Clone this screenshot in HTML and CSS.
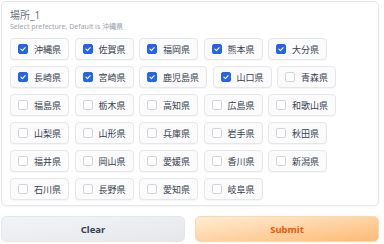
FILE: index.html
```html
<!DOCTYPE html>
<html lang="ja">
<head>
<meta charset="utf-8">
<link rel="stylesheet" href="styles.css">
</head>
<body>
<div class="app">
  <div class="card">
    <div class="label">場所_1</div>
    <div class="info">Select prefecture, Default is 沖縄県</div>
    <div class="group">
      <label class="item"><span class="box on"><svg viewBox="0 0 10 10"><path d="M2.4 5.2 L4.3 7 L7.7 3.2"/></svg></span>沖縄県</label>
      <label class="item"><span class="box on"><svg viewBox="0 0 10 10"><path d="M2.4 5.2 L4.3 7 L7.7 3.2"/></svg></span>佐賀県</label>
      <label class="item"><span class="box on"><svg viewBox="0 0 10 10"><path d="M2.4 5.2 L4.3 7 L7.7 3.2"/></svg></span>福岡県</label>
      <label class="item"><span class="box on"><svg viewBox="0 0 10 10"><path d="M2.4 5.2 L4.3 7 L7.7 3.2"/></svg></span>熊本県</label>
      <label class="item"><span class="box on"><svg viewBox="0 0 10 10"><path d="M2.4 5.2 L4.3 7 L7.7 3.2"/></svg></span>大分県</label>
      <label class="item"><span class="box on"><svg viewBox="0 0 10 10"><path d="M2.4 5.2 L4.3 7 L7.7 3.2"/></svg></span>長崎県</label>
      <label class="item"><span class="box on"><svg viewBox="0 0 10 10"><path d="M2.4 5.2 L4.3 7 L7.7 3.2"/></svg></span>宮崎県</label>
      <label class="item"><span class="box on"><svg viewBox="0 0 10 10"><path d="M2.4 5.2 L4.3 7 L7.7 3.2"/></svg></span>鹿児島県</label>
      <label class="item"><span class="box on"><svg viewBox="0 0 10 10"><path d="M2.4 5.2 L4.3 7 L7.7 3.2"/></svg></span>山口県</label>
      <label class="item"><span class="box"></span>青森県</label>
      <label class="item"><span class="box"></span>福島県</label>
      <label class="item"><span class="box"></span>栃木県</label>
      <label class="item"><span class="box"></span>高知県</label>
      <label class="item"><span class="box"></span>広島県</label>
      <label class="item"><span class="box"></span>和歌山県</label>
      <label class="item"><span class="box"></span>山梨県</label>
      <label class="item"><span class="box"></span>山形県</label>
      <label class="item"><span class="box"></span>兵庫県</label>
      <label class="item"><span class="box"></span>岩手県</label>
      <label class="item"><span class="box"></span>秋田県</label>
      <label class="item"><span class="box"></span>福井県</label>
      <label class="item"><span class="box"></span>岡山県</label>
      <label class="item"><span class="box"></span>愛媛県</label>
      <label class="item"><span class="box"></span>香川県</label>
      <label class="item"><span class="box"></span>新潟県</label>
      <label class="item"><span class="box"></span>石川県</label>
      <label class="item"><span class="box"></span>長野県</label>
      <label class="item"><span class="box"></span>愛知県</label>
      <label class="item"><span class="box"></span>岐阜県</label>
    </div>
  </div>
  <div class="actions">
    <button class="btn clear">Clear</button>
    <button class="btn submit">Submit</button>
  </div>
</div>
</body>
</html>
```

FILE: styles.css
```css
html, body {
  margin: 0;
  padding: 0;
  background: #ffffff;
}
body {
  font-family: "Noto Sans", "Noto Sans CJK JP", sans-serif;
}
.app {
  width: 378px;
  padding: 1px 0 0 1px;
}
.card {
  background: #ffffff;
  border: 1px solid #e5e7eb;
  border-radius: 5px;
  padding: 6px 8px 5px 8px;
  box-shadow: 0 1px 2px rgba(0,0,0,0.04);
}
.label {
  font-size: 10px;
  line-height: 14px;
  color: #6b7280;
}
.info {
  font-size: 7px;
  line-height: 10px;
  color: #9ca3af;
  margin-bottom: 6px;
}
.group {
  display: flex;
  flex-wrap: wrap;
  gap: 6px 5.5px;
}
.item {
  display: flex;
  align-items: center;
  height: 22px;
  box-sizing: border-box;
  padding: 0 7px;
  border: 1px solid #e5e7eb;
  border-radius: 4px;
  background: #fbfbfc;
  box-shadow: 0 1px 1px rgba(0,0,0,0.04);
  font-family: "Noto Sans CJK JP", sans-serif;
  font-size: 9px;
  color: #374151;
}
.box {
  width: 10px;
  height: 10px;
  box-sizing: border-box;
  border: 1px solid #d1d5db;
  border-radius: 2px;
  background: #ffffff;
  margin-right: 6px;
  display: flex;
}
.box.on {
  background: #2563eb;
  border-color: #2563eb;
}
.box svg {
  width: 100%;
  height: 100%;
}
.box svg path {
  fill: none;
  stroke: #ffffff;
  stroke-width: 1.4;
  stroke-linecap: round;
  stroke-linejoin: round;
}
.actions {
  display: flex;
  gap: 10px;
  margin-top: 10px;
}
.btn {
  flex: 1;
  height: 26px;
  border-radius: 5px;
  font-family: "Noto Sans", sans-serif;
  font-weight: 700;
  font-size: 9.5px;
  cursor: pointer;
}
.clear {
  background: linear-gradient(to bottom right, #f3f4f6, #e5e7eb);
  border: 1px solid #e5e7eb;
  color: #374151;
}
.submit {
  background: linear-gradient(to bottom right, #ffedd5, #fdba74);
  border: 1px solid #fed7aa;
  color: #ea580c;
}
```
